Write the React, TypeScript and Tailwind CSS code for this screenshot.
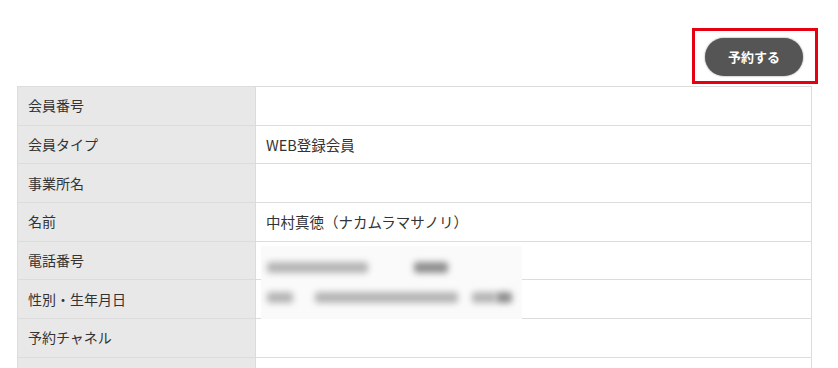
const rows: { label: string; value: string }[] = [
  { label: "会員番号", value: "" },
  { label: "会員タイプ", value: "WEB登録会員" },
  { label: "事業所名", value: "" },
  { label: "名前", value: "中村真徳（ナカムラマサノリ）" },
  { label: "電話番号", value: "" },
  { label: "性別・生年月日", value: "" },
  { label: "予約チャネル", value: "" },
  { label: "", value: "" },
];

function Blob({ w, dark }: { w: number; dark?: boolean }) {
  return (
    <div
      className={`h-[11px] rounded-[3px] blur-[3px] ${dark ? "bg-[#8f8f8f]" : "bg-[#b5b5b5]"}`}
      style={{ width: w }}
    />
  );
}

export default function App() {
  return (
    <div
      className="w-[838px] h-[368px] overflow-hidden bg-white text-[#333] text-[14px]"
      style={{ fontFamily: '"Noto Sans CJK JP", "Noto Sans", sans-serif' }}
    >
      <div className="flex justify-end pt-[28px] pr-[20px] h-[86px]">
        <div className="w-[126px] h-[56px] border-[3px] border-[#e50012] flex items-start justify-start pl-[10px] pt-[7px]">
          <button className="w-[98px] h-[38px] rounded-full bg-[#555] text-white text-[13px] font-bold shadow-[0_0_2px_rgba(0,0,0,0.5)]">
            予約する
          </button>
        </div>
      </div>

      <div className="relative ml-[17px] w-[795px] border-t border-l border-r border-[#dcdcdc]">
        {rows.map((r, i) => (
          <div key={i} className="flex h-[38.7px] border-b border-[#dcdcdc]">
            <div className="w-[238px] shrink-0 bg-[#e8e8e8] border-r border-[#dcdcdc] flex items-center pl-[10px]">
              {r.label}
            </div>
            <div className="flex-1 flex items-center pl-[10px] text-[14.5px]">{r.value}</div>
          </div>
        ))}

        <div className="absolute left-[243px] top-[159px] w-[261px] h-[73px] bg-[#fafafa] flex flex-col justify-around py-[6px] pl-[6px]">
          <div className="flex items-center gap-[46px]">
            <Blob w={101} />
            <Blob w={34} dark />
          </div>
          <div className="flex items-center">
            <Blob w={26} />
            <div className="w-[22px]" />
            <Blob w={143} />
            <div className="w-[14px]" />
            <Blob w={24} />
            <Blob w={16} dark />
          </div>
        </div>
      </div>
    </div>
  );
}
